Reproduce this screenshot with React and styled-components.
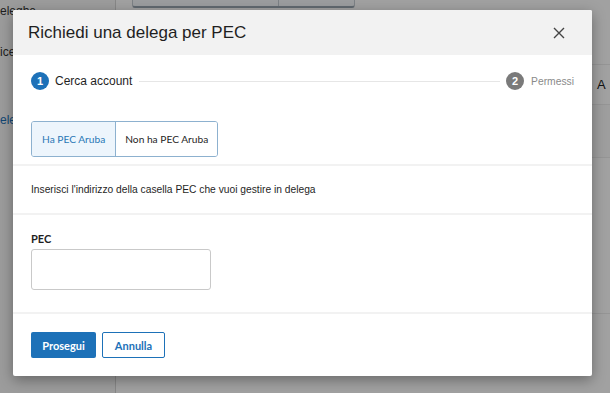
import React from "react";
import styled, { createGlobalStyle } from "styled-components";

const Global = createGlobalStyle`
  html, body { margin: 0; padding: 0; background: #fff; }
  * { box-sizing: border-box; }
`;

const BLUE = "#1d71b8";

const Root = styled.div`
  position: relative;
  width: 610px;
  height: 393px;
  overflow: hidden;
  background: #fff;
  font-family: "Liberation Sans", Arial, sans-serif;
`;

const Page = styled.div`
  display: flex;
  height: 100%;
`;

const Sidebar = styled.nav`
  width: 116px;
  flex-shrink: 0;
  background: #f7f7f7;
  border-right: 1px solid #d6d6d6;
  display: flex;
  flex-direction: column;
  padding-top: 1px;
`;

const NavItem = styled.div`
  height: 20px;
  line-height: 20px;
  font-size: 12px;
  white-space: nowrap;
  margin-top: ${(p) => p.$offset || 0}px;
  color: ${(p) => (p.$active ? BLUE : "#333")};
`;

const Main = styled.main`
  flex: 1;
  display: flex;
  flex-direction: column;
`;

const Toolbar = styled.div`
  height: 64px;
  padding-left: 16px;
  display: flex;
  align-items: flex-start;
`;

const ToolGroup = styled.div`
  display: flex;
  margin-top: -20px;
  height: 28px;
  border: 1px solid #c4ccd3;
  border-bottom: 2px solid #9aa7b2;
  border-radius: 3px;
  background: #f6f9fc;
`;

const ToolButton = styled.div`
  width: ${(p) => p.$w}px;
  & + & { border-left: 1px solid #c4ccd3; }
`;

const TableHead = styled.div`
  height: 41px;
  border-top: 1px solid #ececec;
  border-bottom: 1px solid #ececec;
  display: flex;
  align-items: center;
  justify-content: flex-end;
`;

const HeadCell = styled.div`
  width: 13px;
  font-size: 13px;
  color: #222;
`;

const TableRow = styled.div`
  height: ${(p) => p.$h}px;
  background: ${(p) => p.$bg || "#fff"};
  border-bottom: 1px solid #ececec;
`;

const Overlay = styled.div`
  position: absolute;
  inset: 0;
  background: rgba(0, 0, 0, 0.37);
`;

const Modal = styled.div`
  position: absolute;
  left: 13px;
  top: 10px;
  width: 579px;
  background: #fff;
  border-radius: 2px;
  overflow: hidden;
  box-shadow: 0 4px 14px rgba(0, 0, 0, 0.35);
  display: flex;
  flex-direction: column;
`;

const Header = styled.header`
  height: 45px;
  background: #f2f2f2;
  display: flex;
  align-items: center;
  justify-content: space-between;
  padding: 0 27px 0 15px;
`;

const Title = styled.h2`
  margin: 0;
  font-family: "Liberation Sans", Arial, sans-serif;
  font-weight: 400;
  font-size: 17px;
  color: #1f1f1f;
`;

const CloseButton = styled.button`
  border: 0;
  padding: 0;
  background: none;
  width: 12px;
  height: 12px;
  display: flex;
  cursor: pointer;
`;

const Stepper = styled.div`
  display: flex;
  align-items: center;
  height: 18px;
  margin: 17px 18px 0;
`;

const StepCircle = styled.span`
  width: 18px;
  height: 18px;
  border-radius: 50%;
  background: ${(p) => p.$color};
  color: #fff;
  font-family: "Liberation Sans", Arial, sans-serif;
  font-size: 11px;
  font-weight: 700;
  display: flex;
  align-items: center;
  justify-content: center;
  flex-shrink: 0;
`;

const StepLabel = styled.span`
  margin-left: ${(p) => p.$gap}px;
  font-family: "Liberation Sans", Arial, sans-serif;
  font-size: ${(p) => p.$size}px;
  color: ${(p) => p.$color};
  white-space: nowrap;
`;

const StepLine = styled.span`
  flex: 1;
  height: 1px;
  background: #e6e6e6;
  margin: 0 6px 0 7px;
`;

const ToggleWrap = styled.div`
  padding: 31px 18px 7px;
  display: flex;
`;

const ToggleGroup = styled.div`
  display: flex;
  height: 36px;
  border: 1px solid #8db1cf;
  border-radius: 3px;
  overflow: hidden;
`;

const ToggleButton = styled.button`
  border: 0;
  padding: 0 ${(p) => p.$pad}px;
  font-family: Lato, "Liberation Sans", sans-serif;
  font-size: 10.2px;
  background: ${(p) => (p.$active ? "#edf5fc" : "#fff")};
  color: ${(p) => (p.$active ? "#2a78b6" : "#1f1f1f")};
  & + & { border-left: 1px solid #8db1cf; }
`;

const Section = styled.section`
  border-top: 2px solid #f2f2f2;
  padding: ${(p) => p.$pad};
  display: flex;
  flex-direction: column;
  align-items: flex-start;
  justify-content: ${(p) => p.$justify || "flex-start"};
  height: ${(p) => (p.$h ? `${p.$h}px` : "auto")};
`;

const Description = styled.p`
  margin: 0;
  font-family: "Liberation Sans", Arial, sans-serif;
  font-size: 10.25px;
  color: #1f1f1f;
`;

const Label = styled.label`
  font-family: Lato, "Liberation Sans", sans-serif;
  font-weight: 700;
  font-size: 11px;
  line-height: 14px;
  color: #1f1f1f;
`;

const Input = styled.input`
  margin-top: 3px;
  width: 180px;
  height: 41px;
  border: 1px solid #c9c9c9;
  border-radius: 3px;
  background: #fff;
  outline: none;
`;

const Footer = styled.footer`
  border-top: 2px solid #f2f2f2;
  padding: 18px;
  display: flex;
  gap: 6px;
`;

const Button = styled.button`
  height: 26px;
  width: ${(p) => p.$w}px;
  padding: 0;
  border-radius: 2px;
  font-family: Lato, "Liberation Sans", sans-serif;
  font-weight: 700;
  font-size: 11px;
  border: ${(p) => (p.$primary ? "0" : `1.5px solid ${BLUE}`)};
  background: ${(p) => (p.$primary ? BLUE : "#fff")};
  color: ${(p) => (p.$primary ? "#fff" : BLUE)};
`;

export default function App() {
  return (
    <Root>
      <Global />
      <Page>
        <Sidebar>
          <NavItem>eleghe</NavItem>
          <NavItem $offset={21}>ice</NavItem>
          <NavItem $offset={48} $active>
            eleghe
          </NavItem>
        </Sidebar>
        <Main>
          <Toolbar>
            <ToolGroup>
              <ToolButton $w={145} />
              <ToolButton $w={76} />
            </ToolGroup>
          </Toolbar>
          <TableHead>
            <HeadCell>A</HeadCell>
          </TableHead>
          <TableRow $h={53} $bg="#fbfbfb" />
          <TableRow $h={156} />
        </Main>
      </Page>
      <Overlay />
      <Modal role="dialog">
        <Header>
          <Title>Richiedi una delega per PEC</Title>
          <CloseButton aria-label="Chiudi">
            <svg width="12" height="12" viewBox="0 0 12 12">
              <path d="M1 1 L11 11 M11 1 L1 11" stroke="#444" strokeWidth="1.4" fill="none" />
            </svg>
          </CloseButton>
        </Header>
        <Stepper>
          <StepCircle $color={BLUE}>1</StepCircle>
          <StepLabel $gap={6} $size={12} $color="#1f1f1f">
            Cerca account
          </StepLabel>
          <StepLine />
          <StepCircle $color="#7a7a7a">2</StepCircle>
          <StepLabel $gap={7} $size={10.3} $color="#8a8a8a">
            Permessi
          </StepLabel>
        </Stepper>
        <ToggleWrap>
          <ToggleGroup>
            <ToggleButton $active $pad={10}>
              Ha PEC Aruba
            </ToggleButton>
            <ToggleButton $pad={9}>Non ha PEC Aruba</ToggleButton>
          </ToggleGroup>
        </ToggleWrap>
        <Section $pad="0 18px" $h={49} $justify="center">
          <Description>
            Inserisci l'indirizzo della casella PEC che vuoi gestire in delega
          </Description>
        </Section>
        <Section $pad="17px 18px 22px">
          <Label>PEC</Label>
          <Input />
        </Section>
        <Footer>
          <Button $primary $w={65}>
            Prosegui
          </Button>
          <Button $w={63}>Annulla</Button>
        </Footer>
      </Modal>
    </Root>
  );
}
